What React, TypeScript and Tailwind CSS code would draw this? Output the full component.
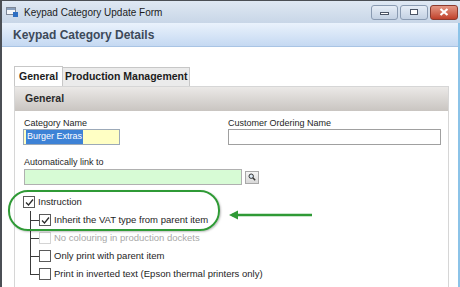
import React from "react";

function Check({ checked, disabled }: { checked?: boolean; disabled?: boolean }) {
  return (
    <span
      className={
        "flex h-[12px] w-[12px] shrink-0 items-center justify-center border bg-white " +
        (disabled ? "border-[#d4d4d4]" : "border-[#5a5a5a]")
      }
    >
      {checked && (
        <svg width="9" height="9" viewBox="0 0 9 9">
          <path d="M1 4.5 L3.5 7 L8 1.5" fill="none" stroke="#2b2b2b" strokeWidth="1.3" />
        </svg>
      )}
    </span>
  );
}

function ChildRow({
  label,
  checked,
  disabled,
  last,
}: {
  label: string;
  checked?: boolean;
  disabled?: boolean;
  last?: boolean;
}) {
  return (
    <div className="flex h-[18px] items-center">
      <div className="relative h-full w-[9px] shrink-0">
        <span
          className={
            "absolute left-0 top-0 w-px bg-[#3a3a3a] " + (last ? "h-[9px]" : "h-full")
          }
        />
        <span className="absolute left-0 top-[9px] h-px w-[9px] bg-[#3a3a3a]" />
      </div>
      <Check checked={checked} disabled={disabled} />
      <span className={"ml-[3px] " + (disabled ? "text-[#a8a8a8]" : "text-[#1e1e1e]")}>
        {label}
      </span>
    </div>
  );
}

export default function App() {
  return (
    <div className="relative h-[287px] w-[460px] overflow-hidden bg-white font-['Liberation_Sans',Arial,sans-serif] text-[9px]">
      <div className="flex h-full flex-col border-l-2 border-t border-[#4b4f55]">
        {/* title bar */}
        <div className="flex h-[22px] shrink-0 items-center bg-gradient-to-b from-[#dfe8f3] to-[#c8d6e7] pr-[2px]">
          <svg className="ml-[4px]" width="13" height="11" viewBox="0 0 13 11">
            <rect x="0.5" y="0.5" width="9" height="7" fill="#f4f6f9" stroke="#7d8797" />
            <rect x="1" y="1" width="8" height="2" fill="#8aa0bd" />
            <rect x="7" y="5" width="5" height="5" fill="#2f6fc2" />
          </svg>
          <span className="ml-[5px] text-[10px] text-[#1b1b1b]">Keypad Category Update Form</span>
          <div className="ml-auto flex gap-[2px]">
            <div className="flex h-[15px] w-[27px] items-center justify-center rounded-[3px] border border-[#8a9bb2] bg-gradient-to-b from-[#e6edf6] to-[#c3d1e3]">
              <span className="mt-[3px] h-[3px] w-[9px] border border-[#4b5566] bg-white" />
            </div>
            <div className="flex h-[15px] w-[28px] items-center justify-center rounded-[3px] border border-[#8a9bb2] bg-gradient-to-b from-[#e6edf6] to-[#c3d1e3]">
              <span className="h-[6px] w-[8px] border border-[#4b5566] bg-white" />
            </div>
            <div className="flex h-[15px] w-[28px] items-center justify-center rounded-[3px] border border-[#8b3a2e] bg-gradient-to-b from-[#e39684] to-[#c0402a]">
              <svg width="10" height="8" viewBox="0 0 10 8">
                <path d="M1.5 1 L8.5 7 M8.5 1 L1.5 7" stroke="#ffffff" strokeWidth="2.2" />
              </svg>
            </div>
          </div>
        </div>

        <div className="flex flex-1 flex-col border-r-2 border-[#8cc3e8]">
          {/* header band */}
          <div className="flex h-[24px] shrink-0 items-center border-b border-[#a9c4e4] bg-gradient-to-b from-[#eaf2fc] to-[#c5d9f2] pl-[11px]">
            <span className="text-[12px] font-bold text-[#3d4a5a]">Keypad Category Details</span>
          </div>

          <div className="flex flex-1 flex-col pl-[12px] pr-[9px] pt-[19px]">
            {/* tabs */}
            <div className="flex h-[20px] items-end text-[10.5px] font-bold text-[#1c1c1c]">
              <div className="flex h-[20px] w-[49px] items-center border border-b-0 border-[#c7c7c7] bg-white pl-[4px]">
                General
              </div>
              <div className="flex h-[19px] w-[127px] items-center border border-b-0 border-l-0 border-[#c7c7c7] bg-[#ebebeb] pl-[2px]">
                Production Management
              </div>
            </div>

            {/* panel */}
            <div className="flex flex-1 flex-col border border-b-0 border-[#d6d6d6]">
              <div className="flex h-[24px] items-center bg-gradient-to-b from-[#ebe9e7] to-[#c9c5c1] pl-[10px] text-[10.5px] font-bold text-[#2a2a2a]">
                General
              </div>

              <div className="flex flex-col pl-[8px] pt-[6px] text-[#1e1e1e]">
                <div className="flex">
                  <div className="flex w-[205px] flex-col">
                    <span className="h-[12px] pl-[1px]">Category Name</span>
                    <div className="flex h-[16px] w-[97px] items-center border border-[#9ca9b8] bg-[#ffffc4] pl-[2px]">
                      <span className="bg-[#3d82d6] px-[1px] text-white">Burger Extras</span>
                    </div>
                  </div>
                  <div className="flex flex-col">
                    <span className="h-[12px]">Customer Ordering Name</span>
                    <div className="h-[16px] w-[213px] border border-[#a0a0a0] bg-white" />
                  </div>
                </div>

                <span className="mt-[11px] h-[13px] pl-[1px]">Automatically link to</span>
                <div className="flex items-center">
                  <div className="ml-[1px] h-[16px] w-[218px] border border-[#b0b0b0] bg-[#d7fbd5]" />
                  <div className="ml-[3px] flex h-[13px] w-[14px] items-center justify-center border border-[#a8a8a8] bg-gradient-to-b from-[#f6f6f6] to-[#d8d8d8]">
                    <svg width="8" height="8" viewBox="0 0 8 8">
                      <circle cx="3.2" cy="3.2" r="2.2" fill="#dce9f5" stroke="#333" strokeWidth="1" />
                      <path d="M4.8 4.8 L7.2 7.2" stroke="#333" strokeWidth="1.5" />
                    </svg>
                  </div>
                </div>

                {/* checkboxes */}
                <div className="mt-[8px] flex flex-col text-[9.5px]">
                  <div className="flex h-[18px] items-center">
                    <Check checked />
                    <span className="ml-[3px]">Instruction</span>
                  </div>
                  <div className="flex flex-col pl-[7px]">
                    <ChildRow label="Inherit the VAT type from parent item" checked />
                    <ChildRow label="No colouring in production dockets" disabled />
                    <ChildRow label="Only print with parent item" />
                    <ChildRow label="Print in inverted text (Epson thermal printers only)" last />
                  </div>
                </div>
              </div>
            </div>
          </div>
        </div>
      </div>

      {/* annotation: green oval and arrow */}
      <div className="pointer-events-none absolute left-[8px] top-[190px] h-[41px] w-[212px] rounded-[20px] border-2 border-[#2f9a36] shadow-[1px_1px_2px_rgba(0,0,0,0.25)]" />
      <svg className="pointer-events-none absolute left-[228px] top-[209px]" width="88" height="13" viewBox="0 0 88 13">
        <path d="M4 6 L84 6" stroke="#2f9a36" strokeWidth="2.4" />
        <path d="M1 6 L10 1.5 L10 10.5 Z" fill="#2f9a36" />
      </svg>
    </div>
  );
}
